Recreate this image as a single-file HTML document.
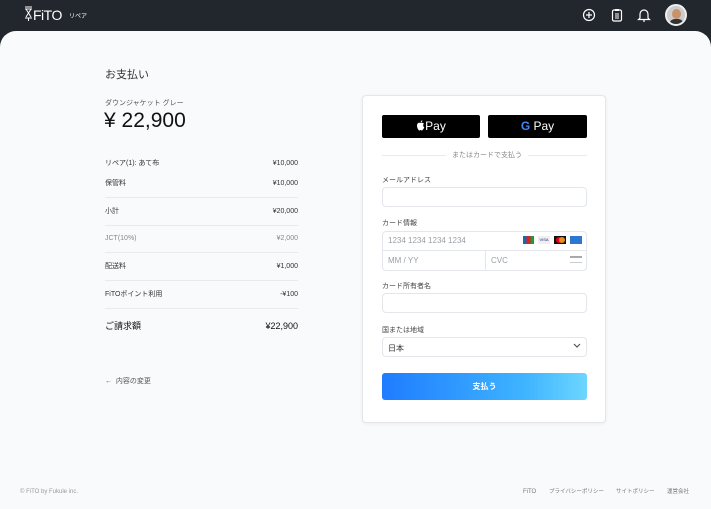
<!DOCTYPE html>
<html><head><meta charset="utf-8"><style>
*{box-sizing:border-box;margin:0;padding:0}
body{width:711px;height:509px;background:#22262d;font-family:"Liberation Sans","Noto Sans CJK JP",sans-serif;position:relative;overflow:hidden;color:#222}
.main{position:absolute;left:0;top:31px;width:711px;height:478px;background:#f9fafb;border-radius:16px 16px 0 0}
.a{position:absolute;white-space:nowrap}
.row{position:absolute;left:105px;width:193px;font-size:7px;color:#333;height:14px;line-height:10px}
.row span{position:absolute;right:0;top:0}
.ln{position:absolute;left:105px;width:193px;height:1px;background:#e8eaed}
.card{position:absolute;left:362px;top:95px;width:244px;height:328px;background:#fff;border:1px solid #e3e6ea;border-radius:4px;box-shadow:0 1px 3px rgba(0,0,0,.06)}
.inp{position:absolute;left:19px;width:205px;height:20px;border:1px solid #e3e6ea;border-radius:4px;background:#fff}
.lbl{position:absolute;left:19px;font-size:7px;color:#444}
.ph{position:absolute;font-size:8px;color:#9aa0a8}
.ft{position:absolute;top:488px;font-size:6px;color:#777;line-height:8px;white-space:nowrap}
</style></head><body>
<div class="a" style="left:24px;top:6px;color:#fff;font-size:14px;letter-spacing:-.5px">
<svg width="9" height="16" viewBox="0 0 9 16" style="vertical-align:-2px"><path d="M1 1h7M1 3h7M2 3l5 8M7 3l-5 8M1 12h7M4.5 12v3" stroke="#fff" stroke-width="1" fill="none"/></svg>FiTO</div>
<div class="a" style="left:69px;top:11px;color:#fff;font-size:6px">リペア</div>
<svg class="a" style="left:582px;top:8px" width="14" height="14"><circle cx="7" cy="7" r="5.5" stroke="#fff" fill="none" stroke-width="1.2"/><path d="M7 4v6M4 7h6" stroke="#fff" stroke-width="1.2"/></svg>
<svg class="a" style="left:610px;top:8px" width="14" height="14"><rect x="2.5" y="2" width="9" height="11" rx="1.5" stroke="#fff" fill="none" stroke-width="1.2"/><rect x="5" y="1" width="4" height="2" fill="#fff"/><path d="M5 6h4M5 8h4M5 10h4" stroke="#fff"/></svg>
<svg class="a" style="left:637px;top:7px" width="14" height="16"><path d="M3 11V7a4 4 0 0 1 8 0v4l1.5 1.5h-11z" stroke="#fff" fill="none" stroke-width="1.2"/><path d="M6 14h2" stroke="#fff" stroke-width="1.2"/></svg>
<div class="a" style="left:665px;top:4px;width:22px;height:22px;border-radius:50%;background:#ccc;border:2px solid #eee;overflow:hidden"><div style="position:absolute;left:5px;top:3px;width:9px;height:10px;border-radius:50%;background:#c9926a"></div><div style="position:absolute;left:2px;top:13px;width:15px;height:10px;border-radius:6px 6px 0 0;background:#333"></div></div>
<div class="main"></div>
<div class="a" style="left:105px;top:66px;font-size:11px;color:#333">お支払い</div>
<div class="a" style="left:105px;top:98px;font-size:7px;color:#555">ダウンジャケット グレー</div>
<div class="a" style="left:104px;top:109px;font-size:21px;color:#111">¥ 22,900</div>
<div class="row" style="top:159px">リペア(1): あて布<span>¥10,000</span></div>
<div class="row" style="top:179px">保管料<span>¥10,000</span></div>
<div class="ln" style="top:197px"></div>
<div class="row" style="top:207px">小計<span>¥20,000</span></div>
<div class="ln" style="top:225px"></div>
<div class="row" style="top:234px;color:#888">JCT(10%)<span>¥2,000</span></div>
<div class="ln" style="top:252px"></div>
<div class="row" style="top:262px">配送料<span>¥1,000</span></div>
<div class="ln" style="top:280px"></div>
<div class="row" style="top:290px">FiTOポイント利用<span>-¥100</span></div>
<div class="ln" style="top:308px"></div>
<div class="row" style="top:320px;font-size:9px;color:#111;line-height:12px">ご請求額<span>¥22,900</span></div>
<div class="a" style="left:105px;top:376px;font-size:7px;color:#555">← &nbsp;内容の変更</div>
<div class="card">
<div class="a" style="left:19px;top:19px;width:98px;height:23px;background:#000;border-radius:2px;color:#fff;font-size:12px;text-align:center;line-height:23px"><svg width="9" height="11" viewBox="0 0 9 11" style="vertical-align:-1px"><path d="M4.5 3C3 2.2 1 3 1 5.5S2.5 10.5 3.5 10.5 4 10 4.5 10 5.5 10.5 6 10.5 8 8.5 8.3 7.3C7 6.8 6.8 4.5 8 3.8 7 2.4 5.5 2.6 4.5 3zM4.6 2.4C4.6 1.3 5.5.4 6.3.4 6.4 1.5 5.5 2.5 4.6 2.4z" fill="#fff"/></svg>Pay</div>
<div class="a" style="left:125px;top:19px;width:99px;height:23px;background:#000;border-radius:2px;color:#fff;font-size:12px;text-align:center;line-height:23px"><b style="color:#4285f4">G</b> Pay</div>
<div class="a" style="left:19px;top:59px;width:205px;height:1px;background:#e8eaed"></div>
<div class="a" style="left:83px;top:54px;background:#fff;padding:0 6px;font-size:7px;color:#888">またはカードで支払う</div>
<div class="lbl" style="top:79px">メールアドレス</div>
<div class="inp" style="top:91px"></div>
<div class="lbl" style="top:122px">カード情報</div>
<div class="inp" style="top:135px;height:40px"></div>
<div class="a" style="left:19px;top:154px;width:205px;height:1px;background:#e3e6ea"></div>
<div class="a" style="left:122px;top:155px;width:1px;height:20px;background:#e3e6ea"></div>
<div class="ph" style="left:25px;top:140px">1234 1234 1234 1234</div>
<div class="a" style="left:160px;top:140px;width:11px;height:8px;background:linear-gradient(90deg,#1d64b0 33%,#d22 33%,#d22 66%,#1a9b3c 66%)"></div>
<div class="a" style="left:175px;top:140px;width:12px;height:8px;background:#f0f0f0;font-size:4px;color:#1a1f71;text-align:center;line-height:8px">VISA</div>
<div class="a" style="left:191px;top:140px;width:12px;height:8px;background:#111"><div style="position:absolute;left:2px;top:1px;width:6px;height:6px;border-radius:50%;background:#eb001b"></div><div style="position:absolute;left:5px;top:1px;width:6px;height:6px;border-radius:50%;background:#f79e1b;opacity:.9"></div></div>
<div class="a" style="left:207px;top:140px;width:12px;height:8px;background:#2e77d0"></div>
<div class="ph" style="left:25px;top:160px">MM / YY</div>
<div class="ph" style="left:128px;top:160px">CVC</div>
<div class="a" style="left:207px;top:160px;width:12px;height:7px;border-top:2px solid #aaa;border-bottom:1px solid #ccc"></div>
<div class="lbl" style="top:185px">カード所有者名</div>
<div class="inp" style="top:197px"></div>
<div class="lbl" style="top:229px">国または地域</div>
<div class="inp" style="top:241px"></div>
<div class="a" style="left:25px;top:247px;font-size:8px;color:#333">日本</div>
<svg class="a" style="left:210px;top:247px" width="8" height="6"><path d="M1 1l3 3 3-3" stroke="#555" fill="none" stroke-width="1.2"/></svg>
<div class="a" style="left:19px;top:277px;width:205px;height:27px;border-radius:3px;background:linear-gradient(90deg,#1f7cff,#3fb4ff 70%,#6dd6ff);color:#fff;font-size:8px;font-weight:bold;text-align:center;line-height:27px">支払う</div>
</div>
<div class="ft" style="left:20px;color:#999">© FiTO by Fukule inc.</div>
<div class="ft" style="left:523px">FiTO</div>
<div class="ft" style="left:549px;font-size:5.5px">プライバシーポリシー</div>
<div class="ft" style="left:616px;font-size:5.5px">サイトポリシー</div>
<div class="ft" style="left:667px;font-size:5.5px">運営会社</div>
</body></html>
